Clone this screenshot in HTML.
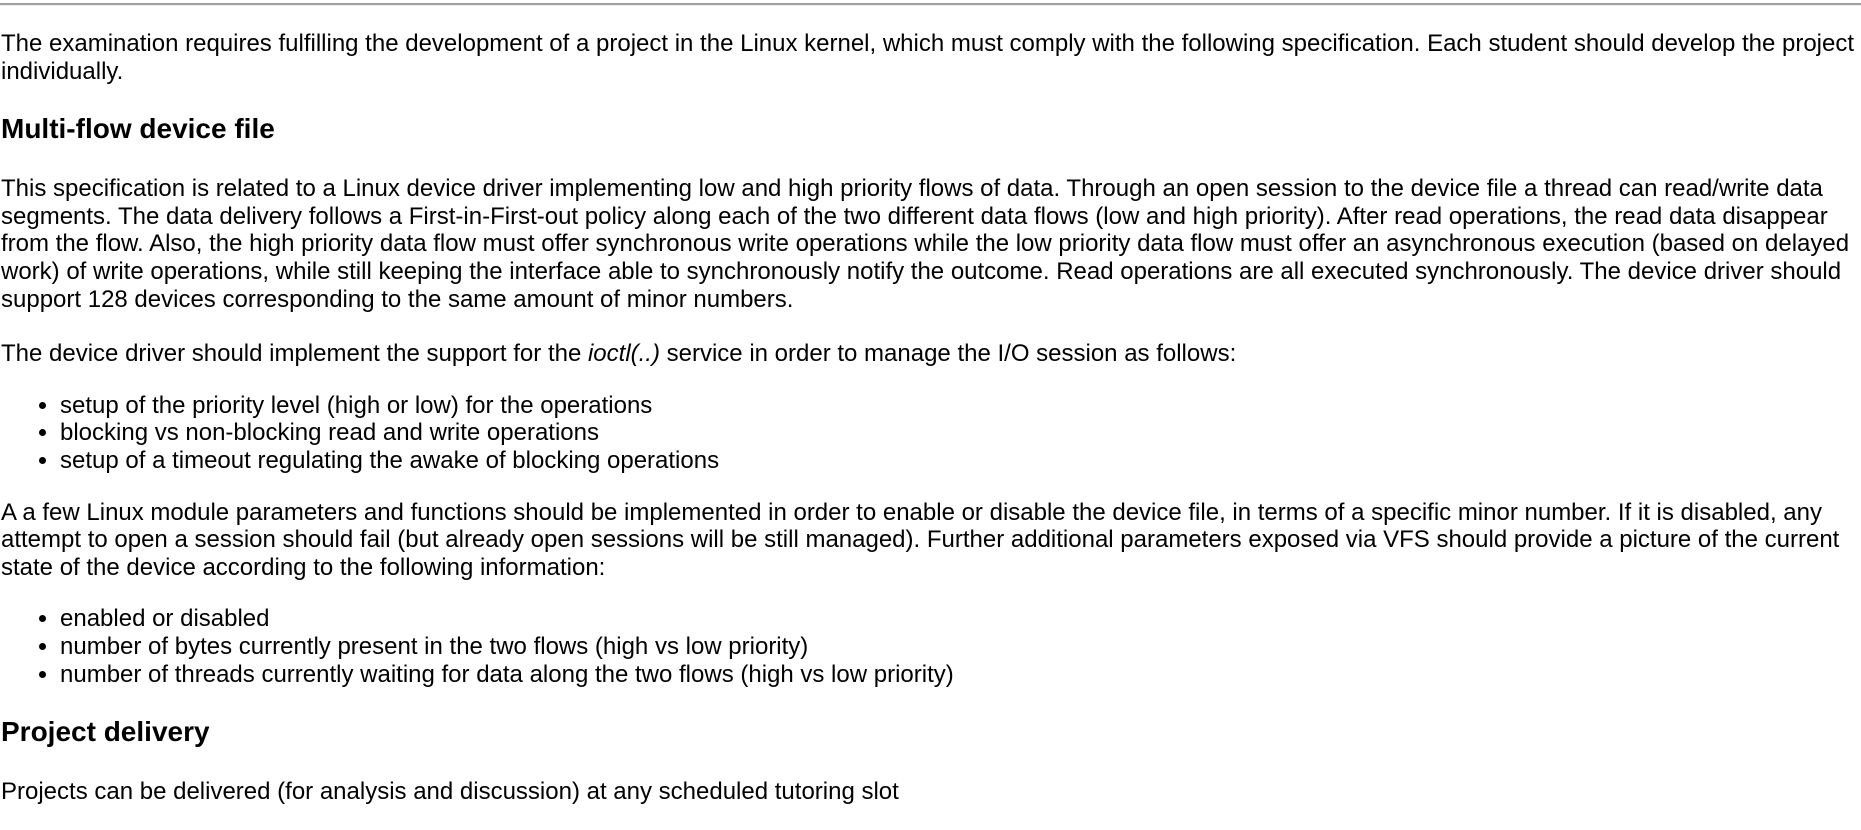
<!DOCTYPE html>
<html><head><meta charset="utf-8"><style>
html,body{margin:0;padding:0;background:#fff;}
body{font-family:"Liberation Sans",Arial,sans-serif;font-size:24px;line-height:27.6px;color:#000;width:1861px;overflow:hidden;}
.c{padding:0 2px 0 1px;}
hr{margin:3px 0 0 0;border:0;border-top:2px solid #a0a0a0;border-bottom:1px solid #eee;height:0;}
p{margin:24px 0;}
h3{font-size:28px;line-height:32px;margin:28px 0 30px;font-weight:bold;}
ul{margin:24px 0;padding-left:59px;}
</style></head><body>
<hr>
<div class="c">
<p>The examination requires fulfilling the development of a project in the Linux kernel, which must comply with the following specification. Each student should develop the project individually.</p>
<h3>Multi-flow device file</h3>
<p>This specification is related to a Linux device driver implementing low and high priority flows of data. Through an open session to the device file a thread can read/write data segments. The data delivery follows a First-in-First-out policy along each of the two different data flows (low and high priority). After read operations, the read data disappear from the flow. Also, the high priority data flow must offer synchronous write operations while the low priority data flow must offer an asynchronous execution (based on delayed work) of write operations, while still keeping the interface able to synchronously notify the outcome. Read operations are all executed synchronously. The device driver should support 128 devices corresponding to the same amount of minor numbers.</p>
<p style="margin-top:27px">The device driver should implement the support for the <i>ioctl(..)</i> service in order to manage the I/O session as follows:</p>
<ul>
<li>setup of the priority level (high or low) for the operations</li>
<li>blocking vs non-blocking read and write operations</li>
<li>setup of a timeout regulating the awake of blocking operations</li>
</ul>
<p>A a few Linux module parameters and functions should be implemented in order to enable or disable the device file, in terms of a specific minor number. If it is disabled, any attempt to open a session should fail (but already open sessions will be still managed). Further additional parameters exposed via VFS should provide a picture of the current state of the device according to the following information:</p>
<ul>
<li>enabled or disabled</li>
<li>number of bytes currently present in the two flows (high vs low priority)</li>
<li>number of threads currently waiting for data along the two flows (high vs low priority)</li>
</ul>
<h3>Project delivery</h3>
<p>Projects can be delivered (for analysis and discussion) at any scheduled tutoring slot</p>
</div>
</body></html>
